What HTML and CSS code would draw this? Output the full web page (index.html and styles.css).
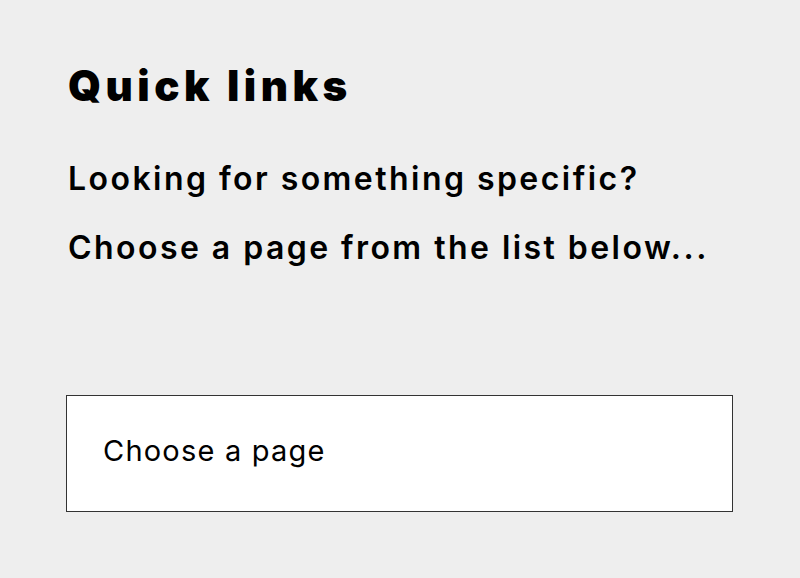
FILE: index.html
```html
<!DOCTYPE html>
<html lang="en">
<head>
<meta charset="utf-8">
<title>Quick links</title>
<link rel="stylesheet" href="styles.css">
</head>
<body>
<main class="quick-links">
  <h2 class="title">Quick links</h2>
  <p class="intro">Looking for something specific?</p>
  <p class="intro">Choose a page from the list below...</p>
  <div class="select">
    <span class="select-label">Choose a page</span>
  </div>
</main>
</body>
</html>
```
FILE: styles.css
```css
html, body {
  margin: 0;
  background: #eeeeee;
}
.quick-links {
  padding: 61px 67px 0 66px;
  font-family: Inter, "Liberation Sans", sans-serif;
  color: #000;
}
.title {
  margin: 0 0 46px 2px;
  font-size: 42px;
  line-height: 50px;
  font-weight: 900;
  letter-spacing: 4.5px;
}
.intro {
  margin: 0 0 25px 2px;
  font-size: 32px;
  line-height: 44px;
  font-weight: 600;
  letter-spacing: 2.45px;
}
.intro + .intro {
  margin-bottom: 0;
}
.select {
  margin-top: 125px;
  background: #fff;
  border: 1px solid #333;
  padding: 35px 36px 40px;
}
.select-label {
  display: block;
  font-size: 29px;
  line-height: 40px;
  font-weight: 400;
  letter-spacing: 1.2px;
}
```
